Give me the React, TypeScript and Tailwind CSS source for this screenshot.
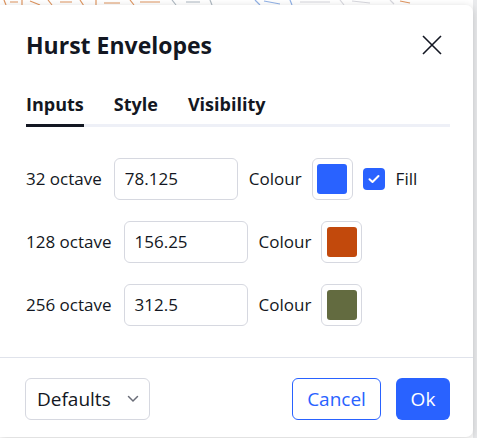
import React from "react";

const font = { fontFamily: '"Open Sans", "Noto Sans", sans-serif' };

function Row({ label, value, color, fill }: { label: string; value: string; color: string; fill?: boolean }) {
  return (
    <div className="flex items-center h-[42px]">
      <span className="text-[17px] text-[#131722] whitespace-nowrap">{label}</span>
      <div className="ml-[12px] w-[124px] h-[42px] border border-[#d6d8e0] rounded-[6px] flex items-center px-[10px] text-[17px] text-[#131722]">
        {value}
      </div>
      <span className="ml-[11px] text-[17px] text-[#131722]">Colour</span>
      <div className="ml-[10px] w-[41px] h-[42px] border border-[#d6d8e0] rounded-[6px] flex items-center justify-center">
        <div className="w-[30px] h-[30px] rounded-[3px]" style={{ backgroundColor: color }} />
      </div>
      {fill && (
        <>
          <div className="ml-[10px] w-[22px] h-[22px] rounded-[4px] bg-[#2962ff] flex items-center justify-center">
            <svg width="12" height="10" viewBox="0 0 12 10" fill="none">
              <path d="M1.5 5.2 L4.5 8 L10.5 2" stroke="white" strokeWidth="2" strokeLinecap="round" strokeLinejoin="round" />
            </svg>
          </div>
          <span className="ml-[11px] text-[17px] text-[#131722]">Fill</span>
        </>
      )}
    </div>
  );
}

export default function App() {
  return (
    <div className="relative w-[477px] h-[438px] overflow-hidden bg-white" style={font}>
      <svg className="absolute left-0 top-0" width="477" height="8" viewBox="0 0 477 8" fill="none">
        <path d="M4 0 L6 5 M10 2 L18 2 M22 0 L22 5 M30 1 L40 5 M48 0 L52 5 M60 2 L72 2 M80 0 L84 6 M96 0 L96 5 M104 3 L120 3 M130 0 L134 5 M140 2 L160 2" stroke="#d2691e" strokeWidth="1.2" opacity="0.7" />
        <path d="M172 0 L176 5 M186 2 L200 2 M210 0 L212 5" stroke="#7a8a9a" strokeWidth="1.2" opacity="0.6" />
        <path d="M255 0 L260 5 M264 1 L280 4 M290 0 L292 5" stroke="#4a7fd6" strokeWidth="1.2" opacity="0.6" />
        <path d="M300 2 L330 2 M340 0 L344 5 M352 1 L370 3 M390 0 L394 4" stroke="#c8c8d0" strokeWidth="1.2" opacity="0.7" />
        <path d="M400 1 L410 3" stroke="#d2691e" strokeWidth="1.2" opacity="0.7" />
      </svg>
      <div className="absolute right-0 top-0 w-[4px] h-[438px] bg-[#e9eaec]" />
      <div className="absolute left-0 top-[5px] w-[473px] h-[432px] bg-white rounded-r-[7px] shadow-[0_2px_8px_rgba(0,0,0,0.18)] flex flex-col">
        <div className="flex items-center justify-between pl-[26px] pr-[31px] pt-[22px]">
          <h1 className="text-[23px] leading-[36px] font-bold text-[#131722]">Hurst Envelopes</h1>
          <svg width="20" height="20" viewBox="0 0 20 20" fill="none">
            <path d="M1 1 L19 19 M19 1 L1 19" stroke="#131722" strokeWidth="1.6" />
          </svg>
        </div>
        <div className="mx-[26px] mt-[29px] w-[424px] flex gap-[30px] border-b-[3px] border-[#eef0f7]">
          <span className="-mb-[3px] pb-[8px] border-b-[3px] border-[#131722] text-[18px] leading-[24px] font-bold text-[#131722]">Inputs</span>
          <span className="-mb-[3px] pb-[8px] border-b-[3px] border-transparent text-[18px] leading-[24px] font-bold text-[#131722]">Style</span>
          <span className="-mb-[3px] pb-[8px] border-b-[3px] border-transparent text-[18px] leading-[24px] font-bold text-[#131722]">Visibility</span>
        </div>
        <div className="flex flex-col gap-[21px] pl-[26px] mt-[31px]">
          <Row label="32 octave" value="78.125" color="#2962ff" fill />
          <Row label="128 octave" value="156.25" color="#c2490c" />
          <Row label="256 octave" value="312.5" color="#636b40" />
        </div>
        <div className="mt-[31px] h-px bg-[#e0e3eb]" />
        <div className="flex items-center justify-between pl-[25px] pr-[23px] pt-[20px]">
          <div className="w-[125px] h-[42px] border border-[#d6d8e0] rounded-[6px] flex items-center justify-between pl-[11px] pr-[10px]">
            <span className="text-[19px] text-[#131722]">Defaults</span>
            <svg width="12" height="8" viewBox="0 0 12 8" fill="none">
              <path d="M1.5 1.5 L6 6 L10.5 1.5" stroke="#6a6d78" strokeWidth="1.5" strokeLinecap="round" />
            </svg>
          </div>
          <div className="flex gap-[15px]">
            <div className="w-[89px] h-[42px] border border-[#2962ff] rounded-[6px] flex items-center justify-center text-[19px] text-[#2962ff]">
              Cancel
            </div>
            <div className="w-[54px] h-[42px] bg-[#2962ff] rounded-[6px] flex items-center justify-center text-[19px] text-white">
              Ok
            </div>
          </div>
        </div>
      </div>
    </div>
  );
}
